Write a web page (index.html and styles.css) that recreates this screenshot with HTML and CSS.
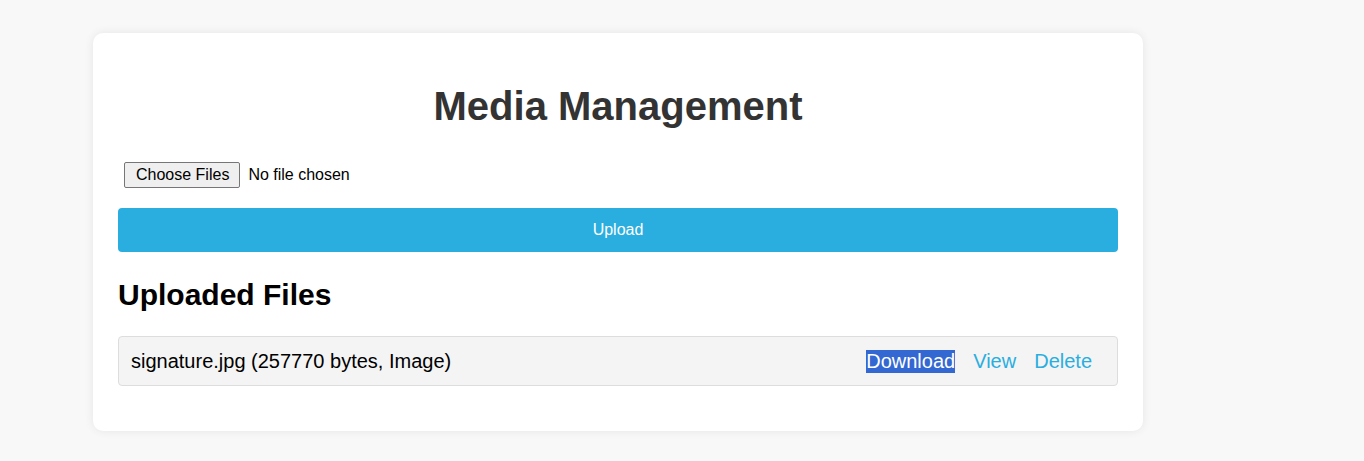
FILE: index.html
```html
<!DOCTYPE html>
<html lang="en">
<head>
<meta charset="utf-8">
<title>Media Management</title>
<link rel="stylesheet" href="styles.css">
</head>
<body>
<div class="card">
  <h1 class="title">Media Management</h1>
  <form class="upload-form">
    <input class="file-input" type="file" multiple>
    <button class="upload-btn" type="button">Upload</button>
  </form>
  <h2 class="subtitle">Uploaded Files</h2>
  <ul class="file-list">
    <li class="file-item">
      <span class="file-name">signature.jpg (257770 bytes, Image)</span>
      <span class="actions">
        <a class="action selected" href="#">Download</a>
        <a class="action" href="#">View</a>
        <a class="action" href="#">Delete</a>
      </span>
    </li>
  </ul>
</div>
</body>
</html>
```
FILE: styles.css
```css
html, body {
  margin: 0;
  padding: 0;
}
body {
  background: #f8f8f8;
  font-family: "Liberation Sans", Arial, sans-serif;
  color: #000;
  padding: 33px 0 30px 93px;
}
.card {
  width: 1000px;
  padding: 25px;
  background: #fff;
  border-radius: 10px;
  box-shadow: 0 0 10px rgba(0, 0, 0, 0.08);
}
.title {
  font-size: 40px;
  font-weight: bold;
  color: #333;
  text-align: center;
  margin: 25px 0 29px;
  line-height: 46px;
}
.upload-form {
  display: flex;
  flex-direction: column;
}
.file-input {
  display: block;
  font-family: "Liberation Sans", Arial, sans-serif;
  font-size: 16px;
  color: #000;
  padding: 4px 6px;
  margin: 0 0 16px;
  line-height: 26px;
}
.file-input::file-selector-button {
  font-family: "Liberation Sans", Arial, sans-serif;
  font-size: 16px;
  height: 26px;
  padding: 0 10px 0 11px;
  margin-right: 8px;
  background: #efefef;
  border: 1px solid #767676;
  border-radius: 2px;
  color: #000;
}
.upload-btn {
  height: 44px;
  width: 100%;
  border: none;
  border-radius: 4px;
  background: #2aaedf;
  color: #fff;
  font-family: "Liberation Sans", Arial, sans-serif;
  font-size: 16px;
}
.subtitle {
  font-size: 30px;
  font-weight: bold;
  margin: 25px 0 24px;
  line-height: 35px;
}
.file-list {
  list-style: none;
  margin: 0 0 20px;
  padding: 0;
}
.file-item {
  display: flex;
  align-items: center;
  justify-content: space-between;
  height: 48px;
  padding: 0 25px 0 12px;
  background: #f4f4f4;
  border: 1px solid #ddd;
  border-radius: 4px;
  font-size: 20px;
  line-height: 23px;
}
.actions {
  display: flex;
  gap: 18px;
}
.action {
  color: #2aaedf;
  text-decoration: none;
}
.action.selected {
  background: #3367d1;
  color: #fff;
}
```
